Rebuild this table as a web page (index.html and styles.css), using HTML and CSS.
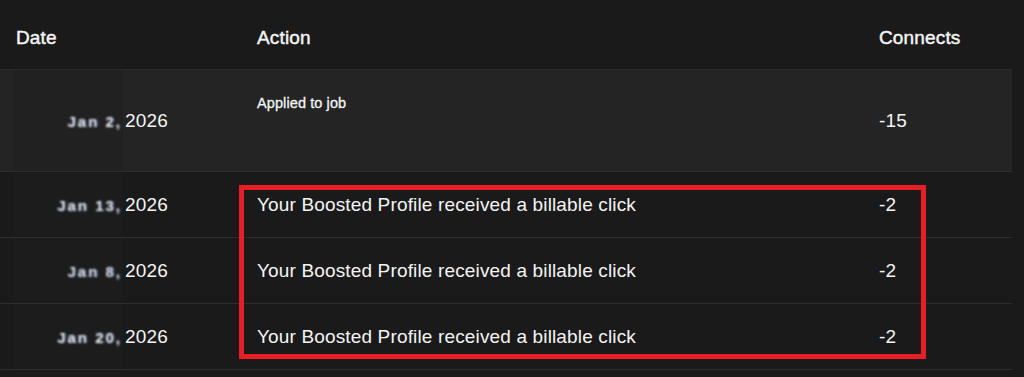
FILE: index.html
```html
<!DOCTYPE html>
<html lang="en">
<head>
<meta charset="utf-8">
<title>Connects history</title>
<link rel="stylesheet" href="styles.css">
</head>
<body>
<div class="page">
  <div class="table">
    <div class="row head">
      <div class="cell date-col">Date</div>
      <div class="cell action-col">Action</div>
      <div class="cell num-col">Connects</div>
    </div>
    <div class="row tall highlight">
      <div class="cell date-col"><span class="redact r1"><span class="smudge">Jan 2,</span></span><span class="year">2026</span></div>
      <div class="cell action-col top"><span class="small">Applied to job</span></div>
      <div class="cell num-col">-15</div>
    </div>
    <div class="row">
      <div class="cell date-col"><span class="redact"><span class="smudge">Jan 13,</span></span><span class="year">2026</span></div>
      <div class="cell action-col">Your Boosted Profile received a billable click</div>
      <div class="cell num-col">-2</div>
    </div>
    <div class="row">
      <div class="cell date-col"><span class="redact"><span class="smudge s2">Jan 8,</span></span><span class="year">2026</span></div>
      <div class="cell action-col">Your Boosted Profile received a billable click</div>
      <div class="cell num-col">-2</div>
    </div>
    <div class="row">
      <div class="cell date-col"><span class="redact"><span class="smudge s3">Jan 20,</span></span><span class="year">2026</span></div>
      <div class="cell action-col">Your Boosted Profile received a billable click</div>
      <div class="cell num-col">-2</div>
    </div>
    <div class="mark"></div>
  </div>
</div>
</body>
</html>
```

FILE: styles.css
```css
html, body {
  margin: 0;
  padding: 0;
  background: #1a1a1a;
}
body {
  font-family: "Liberation Sans", Arial, sans-serif;
  color: #f4f4f4;
  font-size: 19px;
  letter-spacing: 0.15px;
}
.page {
  width: 1024px;
  height: 377px;
  overflow: hidden;
}
.table {
  position: relative;
  width: 1012px;
}
.row {
  display: grid;
  grid-template-columns: 241px 622px 149px;
  height: 66px;
  border-bottom: 1px solid #2e2e2e;
  box-sizing: border-box;
}
.row.head {
  height: 70px;
  border-bottom: 1px solid #2a2a2a;
}
.row.head .cell {
  padding-top: 6px;
  -webkit-text-stroke: 0.45px #f4f4f4;
}
.row.tall {
  height: 102px;
}
.highlight {
  background: #242424;
}
.cell {
  display: flex;
  align-items: center;
  padding-left: 16px;
  box-sizing: border-box;
  white-space: nowrap;
}
.cell.date-col {
  padding-left: 13px;
  align-items: stretch;
}
.row.head .cell.date-col {
  padding-left: 16px;
  align-items: center;
}
.cell.top {
  align-items: flex-start;
  padding-top: 25px;
}
.small {
  font-size: 14.5px;
  letter-spacing: 0.1px;
  -webkit-text-stroke: 0.3px #f4f4f4;
}
.redact {
  width: 110px;
  display: flex;
  align-items: center;
  justify-content: flex-end;
  background: #1c1c1c;
}
.redact.r1 {
  background: #212121;
}
.year {
  display: flex;
  align-items: center;
  padding-left: 2px;
}
.smudge {
  font-size: 15px;
  font-weight: bold;
  color: #f0f2f7;
  filter: blur(1.1px);
  text-shadow: 2px 0 0 #25304f;
  letter-spacing: 2px;
  margin-right: 1px;
  padding-top: 1px;
}
.smudge.s2 {
  color: #e4e7ee;
}
.smudge.s3 {
  color: #f4f5f9;
}
.mark {
  position: absolute;
  left: 239px;
  top: 185px;
  width: 687px;
  height: 174px;
  border: 5px solid #e81e26;
  box-sizing: border-box;
  pointer-events: none;
}
```
